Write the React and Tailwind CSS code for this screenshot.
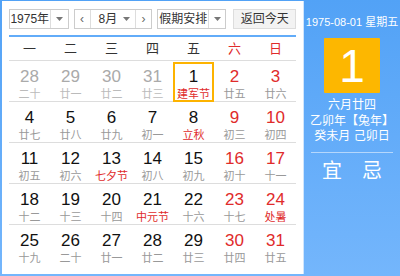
import React from "react";

const F = { fontFamily: '"Liberation Sans", Arial, "Noto Sans CJK SC", sans-serif' };

const rows = [
  [
    ["28", "二十", "o"], ["29", "廿一", "o"], ["30", "廿二", "o"], ["31", "廿三", "o"],
    ["1", "建军节", "sel"], ["2", "廿五", "we"], ["3", "廿六", "we"],
  ],
  [
    ["4", "廿七"], ["5", "廿八"], ["6", "廿九"], ["7", "初一"],
    ["8", "立秋", "fest"], ["9", "初三", "we"], ["10", "初四", "we"],
  ],
  [
    ["11", "初五"], ["12", "初六"], ["13", "七夕节", "fest"], ["14", "初八"],
    ["15", "初九"], ["16", "初十", "we"], ["17", "十一", "we"],
  ],
  [
    ["18", "十二"], ["19", "十三"], ["20", "十四"], ["21", "中元节", "fest"],
    ["22", "十六"], ["23", "十七", "we"], ["24", "处暑", "wefest"],
  ],
  [
    ["25", "十九"], ["26", "二十"], ["27", "廿一"], ["28", "廿二"],
    ["29", "廿三"], ["30", "廿四", "we"], ["31", "廿五", "we"],
  ],
];

function Arrow() {
  return (
    <svg width="7" height="4" viewBox="0 0 7 4">
      <path d="M0 0 L7 0 L3.5 4 Z" fill="#777" />
    </svg>
  );
}

function Cell({ d }) {
  const [n, l, t] = d;
  let numC = "text-[#111]";
  let lunC = "text-[#999]";
  if (t === "o") {
    numC = "text-[#aaa]";
    lunC = "text-[#bbb]";
  }
  if (t === "we" || t === "wefest") numC = "text-[#e02b2b]";
  if (t === "fest" || t === "wefest" || t === "sel") lunC = "text-[#e02b2b]";
  const sel = t === "sel";
  return (
    <div className="flex justify-center">
      <div
        className={
          "flex flex-col items-center w-[41px] h-[40px] " +
          (sel ? "border-2 border-[#fdb300] pt-[4px]" : "pt-[6px]")
        }
      >
        <div className={"text-[17px] leading-[18px] " + numC}>{n}</div>
        <div className={"text-[11px] leading-[13px] mt-[2px] whitespace-nowrap " + lunC}>{l}</div>
      </div>
    </div>
  );
}

export default function App() {
  return (
    <div
      style={F}
      className="w-[400px] h-[276px] flex bg-gradient-to-b from-[#52a2f6] to-[#74b6fc] pl-[2px] pt-[1px] pb-[2px]"
    >
      <div className="w-[301px] shrink-0 h-full bg-white px-[7px] pt-[8px] flex flex-col">
        {/* controls */}
        <div className="flex items-center h-[20px] text-[12px] text-[#333]">
          <div className="flex h-[20px] border border-[#ccc] w-[60px]">
            <div className="flex-1 flex items-center justify-center border-r border-[#ddd]">1975年</div>
            <div className="w-[17px] flex items-center justify-center"><Arrow /></div>
          </div>
          <div className="flex h-[20px] border border-[#ccc] w-[79px] ml-[5px]">
            <div className="w-[16px] flex items-center justify-center border-r border-[#ddd] text-[#666]">‹</div>
            <div className="flex-1 flex items-center pl-[8px] relative">
              8月
              <span className="absolute right-[5px] top-[7px]"><Arrow /></span>
            </div>
            <div className="w-[16px] flex items-center justify-center border-l border-[#ddd] text-[#666]">›</div>
          </div>
          <div className="flex h-[20px] border border-[#ccc] w-[70px] ml-[5px]">
            <div className="flex-1 flex items-center justify-center border-r border-[#ddd]">假期安排</div>
            <div className="w-[16px] flex items-center justify-center"><Arrow /></div>
          </div>
          <div className="flex h-[20px] w-[63px] ml-[7px] items-center justify-center bg-[#f3f3f3] border border-[#ddd]">
            返回今天
          </div>
        </div>
        <div className="h-[2px] bg-[#62acf9] mt-[6px]" />
        {/* header */}
        <div className="grid grid-cols-7 h-[24px] items-center text-[13px] border-b border-[#ddd]">
          {["一", "二", "三", "四", "五", "六", "日"].map((w, i) => (
            <div key={w} className={"text-center " + (i >= 5 ? "text-[#e02b2b]" : "text-[#333]")}>
              {w}
            </div>
          ))}
        </div>
        {rows.map((r, ri) => (
          <div
            key={ri}
            className={"grid grid-cols-7 h-[41px] items-start pt-[1px] " + (ri < 4 ? "border-b border-[#ddd]" : "")}
          >
            {r.map((d, i) => (
              <Cell key={i} d={d} />
            ))}
          </div>
        ))}
      </div>
      <div className="w-[1px] shrink-0 bg-[#cfe5fd]" />
      <div className="flex-1 min-w-0 flex flex-col items-center text-white">
        <div className="text-[11px] mt-[14px] leading-[14px] whitespace-nowrap">1975-08-01 星期五</div>
        <div className="w-[56px] h-[55px] bg-[#fdb700] mt-[9px] flex items-center justify-center text-[46px] leading-none rounded-[1px]">
          1
        </div>
        <div className="text-[12px] leading-[15px] mt-[5px] whitespace-nowrap">六月廿四</div>
        <div className="text-[12px] leading-[15px] mt-[1px] whitespace-nowrap">乙卯年【兔年】</div>
        <div className="text-[12px] leading-[15px] whitespace-nowrap">癸未月 己卯日</div>
        <div className="w-[82px] h-[1px] bg-[#b5d7fc] mt-[8px]" />
        <div className="flex w-full justify-around px-[8px] mt-[6px] text-[20px] leading-[24px]">
          <span>宜</span>
          <span>忌</span>
        </div>
      </div>
    </div>
  );
}
